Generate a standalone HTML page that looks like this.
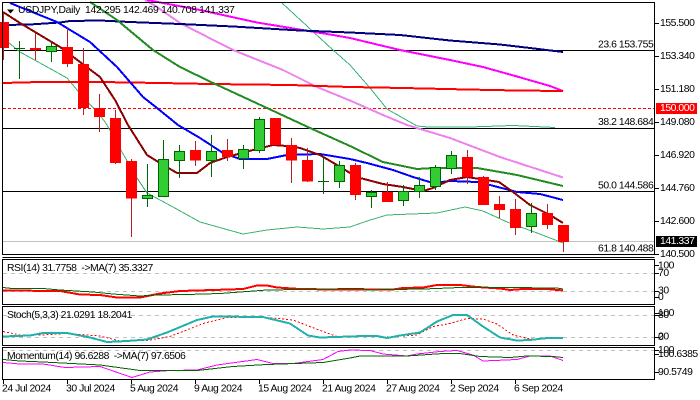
<!DOCTYPE html>
<html><head><meta charset="utf-8">
<style>
html,body{margin:0;padding:0;background:#fff;width:700px;height:400px;overflow:hidden}
svg{display:block}
text{font-family:"Liberation Sans",sans-serif;font-size:10.4px;fill:#000;dominant-baseline:central;letter-spacing:-.45px}
polyline{shape-rendering:crispEdges}
.l{fill:none}
</style></head><body>
<svg width="700" height="400" viewBox="0 0 700 400" xmlns="http://www.w3.org/2000/svg">
<rect width="700" height="400" fill="#fff"/>
<!-- horizontal levels -->
<g shape-rendering="crispEdges" fill="none">
<path d="M3 241.5H654" stroke="#c0c0c0"/>
<path d="M3 108.5H654" stroke="#f00" stroke-dasharray="3 2"/>
<path d="M3 50.5H654M3 128.5H654M3 191.5H654" stroke="#000"/>
</g>
<!-- moving averages -->
<g class="l" fill="none">
<polyline class="l" stroke="#32b37a" stroke-width="1" points="282,3 333,50 350,65 370,88 387,109 417,126 428,127 470,127 513,125.5 555,127.5"/>
<polyline class="l" stroke="#3cb371" stroke-width="1" points="8,42 20,52 40,63 67,78 83,97 100,115 107,125 122,152 137,178 147,193 173,207 200,222 243,234 267,230 297,227 323,229 350,227 367,221 387,215 437,213 465,207 483,211 507,222 537,233 563,243"/>
<polyline class="l" stroke="#ee82ee" stroke-width="2" points="145,0 157,7 180,23 233,50 283,70 317,87 350,100.5 383,115 407,125 450,138 500,157 563,177.5"/>
<polyline class="l" stroke="#f0f" stroke-width="2" points="147,0 200,10 257,22.5 333,35 350,38 400,50 450,60 483,67 517,76.5 550,86 563,91"/>
<polyline class="l" stroke="#00007f" stroke-width="2" points="3,25 30,24.5 60,22.5 70,21 100,20.5 130,22 180,24 233,26.5 300,30.5 350,32.5 400,35 450,40.5 500,44.5 530,48 563,52"/>
<polyline class="l" stroke="#f00" stroke-width="2" points="3,83 40,82 100,82 160,83 210,84 290,85 320,86 350,87 403,88 467,89.5 517,90.5 563,91"/>
<polyline class="l" stroke="#228b22" stroke-width="2" points="90,2 117,20 153,50 180,67 213,83 267,108 310,128 350,146 383,162 417,169 433,168 477,168 517,175 563,186"/>
<polyline class="l" stroke="#00f" stroke-width="2" points="10,3 57,22 90,42 117,67 143,97 157,108 178,125 200,138 223,153 240,159 267,159 287,155 320,154 350,159 367,163 393,170 413,177 433,183 450,181 477,182 490,185 517,192 540,194 563,200"/>
<polyline class="l" stroke="#8b0000" stroke-width="2" points="3,12 20,23 60,47 100,77 115,100 128,125 147,155 160,163 177,173 197,173 210,163 227,157 253,150 273,145 287,146 300,148 320,155 337,165 350,173 360,178 383,184 403,187 423,191 433,188 450,180 467,177 499,182 513,192 530,205 550,215 563,223"/>
</g>
<!-- candles -->
<g shape-rendering="crispEdges">
<path fill="none" stroke="#b22222" d="M3.5 13V60M35.5 33V60M67.5 28V67M83.5 48V115M99.5 94V132M115.5 110V164M131.5 159V237M195.5 141V166M227.5 139V161M291.5 138V183M307.5 148V182M355.5 163V200M387.5 182V202M467.5 150V184M483.5 176V205M499.5 196V218M515.5 199V235M547.5 204V229M563.5 225V252"/>
<path fill="none" stroke="#006400" d="M19.5 41V79M51.5 41V62M147.5 164V207M163.5 140V196M179.5 145V178M211.5 135V177M243.5 145V169M259.5 117V153M323.5 156V194M339.5 161V188M371.5 190V208M403.5 185V206M419.5 177V198M435.5 165V190M451.5 151V174M531.5 203V233"/>
<path fill="#f00" d="M0 22H9V48H0zM30 48h11v2H30zM62 47h11v17H62zM78 64h11v44H78zM94 108h11v9H94zM110 118h11v45H110zM126 161h11v37.5H126zM190 150h11v10.5H190zM222 150h11v7H222zM270 118h11v27H270zM286 145h11v15.5H286zM302 160h11v21.5H302zM350 165h11v30H350zM382 192h11v10H382zM462 157h11v20H462zM478 177h11v28H478zM494 204h11v6H494zM510 209h11v19H510zM542 213h11v12H542zM558 225h11v17H558z"/>
<path fill="#32cd32" stroke="#006400" d="M46.500 46.500h10v5h-10zM142.500 195.500h10v3h-10zM158.500 159.500h10v37h-10zM174.500 151.500h10v9h-10zM206.500 151.500h10v9h-10zM238.500 149.500h10v9h-10zM254.500 119.500h10v31h-10zM334.500 165.500h10v16h-10zM366.500 192.500h10v4h-10zM398.500 191.500h10v9h-10zM414.500 185.500h10v6h-10zM430.500 167.500h10v19h-10zM446.500 155.500h10v13h-10zM526.500 213.500h10v13h-10z"/>
<path fill="none" stroke="#006400" d="M14 48.500H25M318 181.500H329"/>
</g>
<!-- indicator levels -->
<g shape-rendering="crispEdges" fill="none" stroke="#c0c0c0" stroke-dasharray="4 4">
<path d="M3 273.500H654M3 291.500H654M3 315.500H654M3 337.500H654M3 350.500H654"/>
</g>
<!-- RSI -->
<g fill="none">
<polyline stroke="#f00" stroke-width="2" points="3,290.500 60,291 80,294.500 100,295 117,297.500 140,297.500 160,293.500 180,291 213,290 243,289 257,285.500 267,285.500 277,287.500 300,289 333,289.500 350,289.500 393,289.500 403,288 423,287.500 437,285 460,285 477,287 500,288.500 510,290 523,289 547,289 563,290.500"/>
<polyline stroke="#006400" stroke-width="1" points="3,287.500 12,288.500 43,288.500 60,290 93,292 113,294 140,296 157,295 187,294.500 220,293.500 247,291.500 267,290 300,289.500 350,288.500 363,288.500 367,290 393,289.500 423,289 437,288.500 460,287.500 507,287.500 557,288 563,289"/>
</g>
<!-- Stoch -->
<g fill="none">
<polyline stroke="#f00" stroke-width="1" stroke-dasharray="2 2" points="3,331.500 20,335 40,335 67,333.500 100,336 120,341 147,340.500 170,336.500 183,331.500 203,323.500 227,317.500 263,317 293,320 323,331.500 337,336.500 350,336.500 377,336.500 387,337 417,335 433,326.500 450,323.500 467,318.500 483,319 497,324 513,335 530,339 563,338.500"/>
<polyline stroke="#20b2aa" stroke-width="2" points="3,336.500 30,335.500 43,333 67,333 90,337.500 107,342 127,341 147,339.500 167,332.500 197,320 213,316.500 263,317 290,323.500 308,335.500 320,337.500 350,336.500 363,336 377,336 387,338 400,335.500 420,332.500 437,321.500 453,315 467,315 483,326.500 500,337.500 517,340.500 530,340 547,338 563,338"/>
</g>
<!-- Momentum -->
<g fill="none">
<polyline stroke="#f0f" stroke-width="1" points="3,362.500 20,364 43,364 65,367.500 100,366.500 132,377.500 150,372 170,370.500 197,370 217,365 257,359.500 273,363.500 293,363.500 323,359.500 338,351.500 350,350 370,350.500 383,354 407,356 417,354 440,351.500 457,350.500 473,355 483,361 517,359.500 530,356 550,356 563,360.500"/>
<polyline stroke="#006400" stroke-width="1" points="3,359.500 20,361 43,362 100,365 140,370.500 197,370.500 233,366.500 267,364.500 323,362.500 350,358 360,356 407,356 443,353.500 460,353.500 480,356.500 510,357.500 527,356 553,356.500 563,357.500"/>
</g>
<!-- frames -->
<g shape-rendering="crispEdges" fill="none" stroke="#000">
<path d="M2.500 2.500H654.500V254.500H2.500z"/>
<path d="M2.500 257.500H654.500"/>
<path d="M2.500 259.500H654.500V304.500H2.500z"/>
<path d="M2.500 306.500H654.500V345.500H2.500z"/>
<path d="M2.500 347.500H654.500V379.500H2.500z"/>
<path d="M655 23.500h4M655 56.500h4M655 89.500h4M655 122.500h4M655 155.500h4M655 188.500h4M655 221.500h4M655 254.500h4M655 265.500h4M655 273.500h4M655 291.500h4M655 297.500h4M655 313.500h4M655 315.500h4M655 337.500h4M655 350.500h4M655 354.500h4M655 372.500h4"/>
<path d="M3.500 380v4M67.500 380v4M131.500 380v4M195.500 380v4M259.500 380v4M323.500 380v4M387.500 380v4M451.500 380v4M515.500 380v4"/>
</g>
<!-- badges -->
<rect x="656" y="103" width="41" height="11" fill="#f00"/>
<rect x="656" y="236" width="41" height="11" fill="#000"/>
<!-- text -->
<path d="M7 9.500h7l-3.500 4z" fill="#000"/>
<text x="18" y="10.500" style="letter-spacing:-.3px">USDJPY,Daily</text>
<text x="85" y="10.500" style="letter-spacing:-.3px">142.295 142.469 140.708 141.337</text>
<g>
<text x="598" y="45">23.6 153.755</text>
<text x="598" y="122.500">38.2 148.684</text>
<text x="598" y="186">50.0 144.586</text>
<text x="598" y="249">61.8 140.488</text>
<text x="660" y="23.500">155.500</text>
<text x="660" y="56.500">153.340</text>
<text x="660" y="89.500">151.180</text>
<text x="660" y="108.500" style="fill:#fff">150.000</text>
<text x="660" y="122.500">149.080</text>
<text x="660" y="155.500">146.920</text>
<text x="660" y="188.500">144.760</text>
<text x="660" y="221.500">142.600</text>
<text x="660" y="241.500" style="fill:#fff">141.337</text>
<text x="660" y="254.500">140.500</text>
<text x="7" y="268.500">RSI(14) 31.7758&#160;&#160;-&gt;MA(7) 35.3327</text>
<text x="7" y="315.500">Stoch(5,3,3) 21.0291 18.2041</text>
<text x="7" y="356.500">Momentum(14) 96.6288&#160;&#160;-&gt;MA(7) 97.6506</text>
<text x="658" y="266">100</text>
<text x="658" y="273.500">70</text>
<text x="658" y="291">30</text>
<text x="658" y="297.500">0</text>
<text x="658" y="313.500">100</text>
<text x="658" y="315.500">80</text>
<text x="658" y="337">20</text>
<text x="658" y="337.500">0</text>
<text x="658" y="350.500">100</text>
<text x="658" y="354.500">100.6385</text>
<text x="658" y="372.500">90.5749</text>
<text x="2" y="389">24 Jul 2024</text>
<text x="66" y="389">30 Jul 2024</text>
<text x="130" y="389">5 Aug 2024</text>
<text x="194" y="389">9 Aug 2024</text>
<text x="258" y="389">15 Aug 2024</text>
<text x="322" y="389">21 Aug 2024</text>
<text x="386" y="389">27 Aug 2024</text>
<text x="450" y="389">2 Sep 2024</text>
<text x="514" y="389">6 Sep 2024</text>
</g>
</svg>
</body></html>
